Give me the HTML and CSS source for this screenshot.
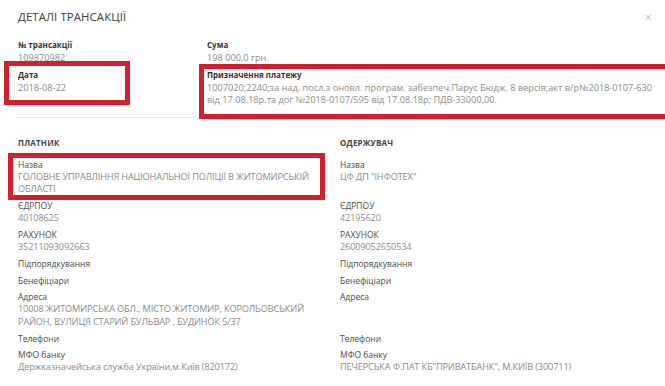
FILE: index.html
```html
<!DOCTYPE html>
<html lang="uk">
<head>
<meta charset="utf-8">
<link rel="stylesheet" href="styles.css">
</head>
<body>
<div class="modal">
  <header class="head">
    <h1 class="title">ДЕТАЛІ ТРАНСАКЦІЇ</h1>
    <span class="close">×</span>
  </header>
  <section class="top">
    <div class="field">
      <div class="label b">№ трансакції</div>
      <div class="value">109870982</div>
    </div>
    <div class="field">
      <div class="label b">Сума</div>
      <div class="value">198 000,0 грн.</div>
    </div>
    <div class="field mark mark-date">
      <div class="label b">Дата</div>
      <div class="value">2018-08-22</div>
    </div>
    <div class="field mark mark-purpose">
      <div class="label b">Призначення платежу</div>
      <div class="value">1007020;2240;за над. посл.з оновл. програм. забезпеч.Парус Бюдж. 8 версія;акт в/р№2018-0107-630 від 17.08.18р.та дог №2018-0107/595 від 17.08.18р; ПДВ-33000,00.</div>
    </div>
  </section>
  <hr class="sep">
  <section class="parties">
    <div class="party-head">ПЛАТНИК</div>
    <div class="party-head">ОДЕРЖУВАЧ</div>

    <div class="field mark mark-name">
      <div class="label">Назва</div>
      <div class="value">ГОЛОВНЕ УПРАВЛІННЯ НАЦІОНАЛЬНОЇ ПОЛІЦІЇ В ЖИТОМИРСЬКІЙ ОБЛАСТІ</div>
    </div>
    <div class="field">
      <div class="label">Назва</div>
      <div class="value">ЦФ ДП "ІНФОТЕХ"</div>
    </div>

    <div class="field">
      <div class="label">ЄДРПОУ</div>
      <div class="value">40108625</div>
    </div>
    <div class="field">
      <div class="label">ЄДРПОУ</div>
      <div class="value">42195620</div>
    </div>

    <div class="field">
      <div class="label">РАХУНОК</div>
      <div class="value">35211093092663</div>
    </div>
    <div class="field">
      <div class="label">РАХУНОК</div>
      <div class="value">26009052650534</div>
    </div>

    <div class="field"><div class="label">Підпорядкування</div></div>
    <div class="field"><div class="label">Підпорядкування</div></div>

    <div class="field"><div class="label">Бенефіціари</div></div>
    <div class="field"><div class="label">Бенефіціари</div></div>

    <div class="field">
      <div class="label">Адреса</div>
      <div class="value">10008 ЖИТОМИРСЬКА ОБЛ., МІСТО ЖИТОМИР, КОРОЛЬОВСЬКИЙ РАЙОН, ВУЛИЦЯ СТАРИЙ БУЛЬВАР , БУДИНОК 5/37</div>
    </div>
    <div class="field"><div class="label">Адреса</div></div>

    <div class="field"><div class="label">Телефони</div></div>
    <div class="field"><div class="label">Телефони</div></div>

    <div class="field">
      <div class="label">МФО банку</div>
      <div class="value">Держказначейська служба України,м.Київ (820172)</div>
    </div>
    <div class="field">
      <div class="label">МФО банку</div>
      <div class="value">ПЕЧЕРСЬКА Ф.ПАТ КБ"ПРИВАТБАНК", М.КИЇВ (300711)</div>
    </div>
  </section>
</div>
</body>
</html>
```
FILE: styles.css
```css
* { box-sizing: border-box; }
html, body { margin: 0; padding: 0; background: #fff; }
body {
  font-family: "Open Sans", "Liberation Sans", sans-serif;
  color: #444;
  overflow: hidden;
}
.modal {
  width: 665px;
  padding: 0 8px 0 18px;
}
.head {
  display: flex;
  justify-content: space-between;
  align-items: flex-start;
  height: 39px;
  padding-top: 9px;
}
.title {
  margin: 0;
  font-size: 11.4px;
  line-height: 16px;
  font-weight: 400;
  color: #3c3c3c;
  letter-spacing: 0.1px;
}
.close {
  font-size: 13px;
  line-height: 12px;
  color: #c4c4c4;
  margin-top: 2px;
  margin-right: 5px;
}
.top {
  display: grid;
  grid-template-columns: 189px 452px;
  align-items: start;
}
.top .value { padding-top: 1px; }
.top .field { margin-bottom: 4px; }
.field {
  margin-bottom: 4.5px;
}
.label {
  font-size: 8.5px;
  line-height: 12px;
  color: #4a4a4a;
}
.label.b {
  font-size: 8px;
  font-weight: 700;
  color: #333;
}
.value {
  font-size: 9.2px;
  line-height: 12.5px;
  color: #8c8c8c;
}
.parties .value { letter-spacing: -0.15px; }
.sep {
  border: 0;
  border-top: 1px solid #e3e3e3;
  margin: 6px 0 0 -2px;
  width: 640px;
}
.parties {
  display: grid;
  grid-template-columns: 314px 300px;
  column-gap: 8px;
  padding-top: 19px;
  align-items: start;
}
.party-head {
  font-size: 8px;
  line-height: 11px;
  font-weight: 700;
  color: #444;
  letter-spacing: 0.2px;
  margin-bottom: 11px;
}
.mark { position: relative; }
.mark::after {
  content: "";
  position: absolute;
  border: 5px solid #d2202e;
  pointer-events: none;
}
.mark-date::after { left: -14px; top: -8px; width: 116px; bottom: -11px; }
.mark-purpose::after { left: -8px; top: -5px; width: 463px; bottom: -12px; }
.mark-name::after { left: -10px; top: -6px; width: 307px; bottom: -4px; }
```
